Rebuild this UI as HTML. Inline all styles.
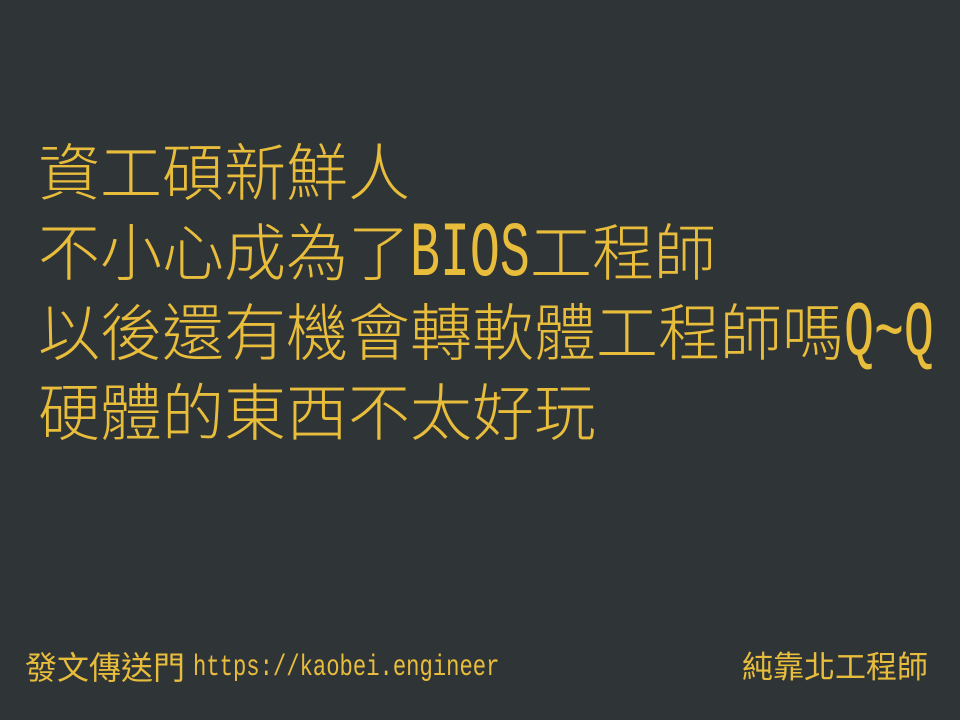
<!DOCTYPE html>
<html><head><meta charset="utf-8"><style>
html,body{margin:0;padding:0}
body{width:960px;height:720px;background:#2f3437;overflow:hidden;position:relative;color:#e8bd3c;font-family:"Liberation Sans","Noto Sans CJK TC",sans-serif;}
.l{position:absolute;left:38px;font-size:62px;line-height:80px;white-space:nowrap;font-weight:300}
.m{display:inline-block;font-family:"Liberation Mono",monospace;font-size:78px;transform:scaleX(0.64);transform-origin:0 0;vertical-align:top;line-height:80px;overflow:visible}
.f{position:absolute;top:650px;font-size:32px;line-height:36px;white-space:nowrap}
.u{position:absolute;left:193px;top:650px;font-family:"Liberation Mono",monospace;font-size:30px;line-height:36px;transform:scaleX(0.74);transform-origin:0 0;white-space:nowrap;color:#e8bd3c}
</style></head><body>
<div class="l" style="top:135px">資工碩新鮮人</div>
<div class="l" style="top:215px">不小心成為了<span class="m" style="width:120px">BIOS</span>工程師</div>
<div class="l" style="top:295px">以後還有機會轉軟體工程師嗎<span class="m" style="width:93px">Q~Q</span></div>
<div class="l" style="top:375px">硬體的東西不太好玩</div>
<div class="f" style="left:25px">發文傳送門</div>
<div class="u">https://kaobei.engineer</div>
<div class="f" style="left:742px;font-size:31px">純靠北工程師</div>
</body></html>
